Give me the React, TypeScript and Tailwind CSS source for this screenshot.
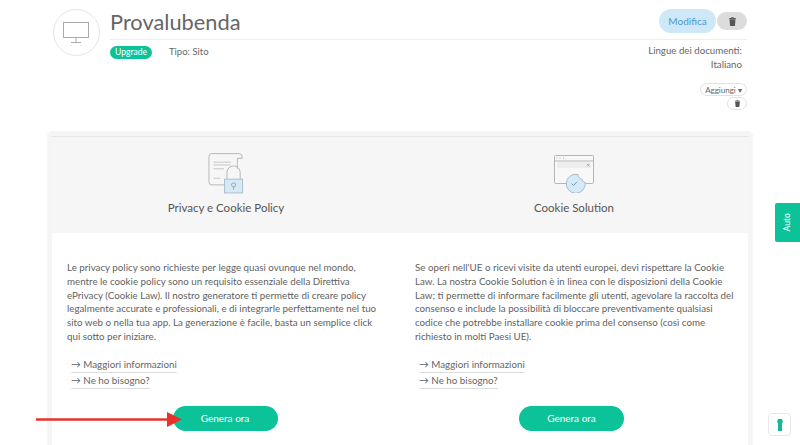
import React from "react";

const Trash = ({ s = 10 }: { s?: number }) => (
  <svg width={s} height={s} viewBox="0 0 12 12" fill="#555">
    <path d="M2 3h8l-.7 8.200a.8.8 0 0 1-.8.8h-5a.8.8 0 0 1-.8-.8z" />
    <rect x="1.500" y="1.200" width="9" height="1.300" rx=".4" />
    <rect x="4.500" y=".3" width="3" height="1.200" rx=".4" />
  </svg>
);

const DocIcon = () => (
  <svg width="36" height="43" viewBox="0 0 38 44" fill="none" stroke="#b5b5b5" strokeWidth="1">
    <path d="M28 1H4a3 3 0 0 0-3 3v27a3 3 0 0 0 3 3h14" />
    <path d="M28 1h5a3 3 0 0 1 3 3v2h-5v11" />
    <path d="M6 10h18M6 13h18" stroke="#c4c4c4" />
    <path d="M6 17h11" stroke="#c4c4c4" />
    <path d="M6 27h7" stroke="#c4c4c4" />
    <path d="M20 28v-7a7 7 0 0 1 14 0v7" />
    <rect x="17.500" y="28" width="19" height="14.500" fill="#d6e9f6" stroke="#a9bccb" />
    <circle cx="27" cy="34" r="2.200" stroke="#93a7b5" />
    <path d="M27 36v3" stroke="#93a7b5" />
  </svg>
);

const WinIcon = () => (
  <svg className="mt-[3px]" width="40" height="38" viewBox="0 0 40 38" fill="none" stroke="#b5b5b5" strokeWidth="1">
    <rect x=".5" y=".5" width="39" height="28" rx="1" fill="#f8f8f8" />
    <path d="M.5 6h39" />
    <rect x="3" y="7" width="34" height="6" fill="#ededed" stroke="none" />
    <path d="M2.500 3h1M5.500 3h1M9 3h1" stroke="#aaa" />
    <path d="M33 9l2.500 2.500M35.500 9L33 11.500" stroke="#aaa" />
    <path d="M24 19.500a9.500 9.500 0 1 0 7.200 8 4 4 0 0 1-3.500-3.500 4 4 0 0 1-3.700-4.500z" fill="#d6e9f6" stroke="#a9bccb" />
    <path d="M17.500 28.500l2 2 3.500-3.800" stroke="#7f96a6" />
  </svg>
);

const Col = ({ title, icon, body, btnClass }: { title: string; icon: React.ReactNode; body: string[]; btnClass: string }) => (
  <div className="flex-1 min-w-0">
    <div className="bg-[#f6f6f6] h-[96px] flex flex-col items-center">
      <div className="h-[49px] mt-[15px] flex items-start">{icon}</div>
      <div className="text-[11.500px] text-[#555] leading-[14px]">{title}</div>
    </div>
    <div className="pt-[28px] px-[15px]">
      <div className="text-[9.750px] leading-[13.800px] text-[#5f5f5f] h-[83px]">
        {body.map((l, i) => (
          <div key={i} className="whitespace-nowrap">{l}</div>
        ))}
      </div>
      <div className="mt-[14px] ml-[4px] flex flex-col items-start text-[9.800px] text-[#666] leading-[13px] gap-[1px]">
        <span className="border-b border-[#ddd] pb-[1px]">→ Maggiori informazioni</span>
        <span className="border-b border-[#ddd] pb-[1px]">→ Ne ho bisogno?</span>
      </div>
      <div className={btnClass}>
        <div className="w-[105px] h-[25px] rounded-full bg-[#0cc298] text-white text-[10px] flex items-center justify-center">Genera ora</div>
      </div>
    </div>
  </div>
);

export default function App() {
  return (
    <div
      className="relative w-[800px] h-[445px] overflow-hidden bg-white text-[#555]"
      style={{ fontFamily: '"Lato", "Noto Sans", sans-serif' }}
    >
      <div className="mx-[53px] pt-[9px] flex items-start gap-[10px]">
        <div className="w-[47px] h-[47px] rounded-full border border-[#e4e4e4] flex items-center justify-center shrink-0">
          <svg width="27" height="21" viewBox="0 0 27 21" fill="none" stroke="#aaa" strokeWidth="1">
            <rect x=".5" y=".5" width="25" height="15" />
            <path d="M13 16v4M8 20.500h10" />
          </svg>
        </div>
        <div className="flex-1 min-w-0">
          <div className="flex items-start justify-between h-[31px] border-b border-[#eee]">
            <div className="text-[21.800px] leading-[26px] text-[#666]">Provalubenda</div>
            <div className="flex items-center gap-[1px]">
              <div className="w-[57px] h-[24px] rounded-full bg-[#cfe8f8] text-[#4c98cf] text-[10px] flex items-center justify-center">Modifica</div>
              <div className="w-[30px] h-[18px] rounded-full bg-[#dcdcdc] flex items-center justify-center"><Trash s={9} /></div>
            </div>
          </div>
          <div className="flex items-start justify-between mt-[5px]">
            <div className="flex items-center">
              <div className="w-[42px] h-[13px] rounded-full bg-[#0cc298] text-white text-[8.500px] flex items-center justify-center">Upgrade</div>
              <div className="ml-[17px] text-[9.500px] text-[#666]">Tipo: Sito</div>
            </div>
            <div className="flex flex-col items-end -mt-[2px]">
              <div className="text-[9.700px] leading-[14px] text-[#666] text-right pr-[5px]">
                Lingue dei documenti:<br />Italiano
              </div>
              <div className="mt-[12px] w-[47px] h-[13px] rounded-full border border-[#e2e2e2] text-[8px] text-[#666] flex items-center justify-center">Aggiungi ▾</div>
              <div className="mt-[1px] w-[20px] h-[13px] rounded-full border border-[#e2e2e2] flex items-center justify-center"><Trash s={7} /></div>
            </div>
          </div>
        </div>
      </div>

      <div className="mt-[21px] mx-[47px] border-[5px] border-[#f5f5f5] rounded-[5px]">
        <div className="flex border-t border-[#e6e6e6] h-[320px]">
          <Col
            title="Privacy e Cookie Policy"
            icon={<DocIcon />}
            btnClass="flex justify-center mt-[17px] pr-[2px]"
            body={[
              "Le privacy policy sono richieste per legge quasi ovunque nel mondo,",
              "mentre le cookie policy sono un requisito essenziale della Direttiva",
              "ePrivacy (Cookie Law). Il nostro generatore ti permette di creare policy",
              "legalmente accurate e professionali, e di integrarle perfettamente nel tuo",
              "sito web o nella tua app. La generazione è facile, basta un semplice click",
              "qui sotto per iniziare.",
            ]}
          />
          <Col
            title="Cookie Solution"
            icon={<WinIcon />}
            btnClass="flex justify-center mt-[17px] pr-[5px]"
            body={[
              "Se operi nell'UE o ricevi visite da utenti europei, devi rispettare la Cookie",
              "Law. La nostra Cookie Solution è in linea con le disposizioni della Cookie",
              "Law; ti permette di informare facilmente gli utenti, agevolare la raccolta del",
              "consenso e include la possibilità di bloccare preventivamente qualsiasi",
              "codice che potrebbe installare cookie prima del consenso (così come",
              "richiesto in molti Paesi UE).",
            ]}
          />
        </div>
      </div>

      <svg className="absolute left-[36px] top-[411px]" width="146" height="16" viewBox="0 0 146 16">
        <path d="M0 8.500h132" stroke="#e8322b" strokeWidth="2.500" />
        <path d="M131 1l15 7.500-15 7.500z" fill="#e8322b" />
      </svg>

      <div className="absolute left-[775px] top-[203px] w-[25px] h-[39px] bg-[#0cc298] rounded-l-[2px] flex items-center justify-center">
        <span className="-rotate-90 text-white text-[8.500px]">Auto</span>
      </div>

      <div className="absolute left-[768px] top-[413px] w-[23px] h-[23px] rounded-[4px] border border-[#e8e8e8] bg-white flex items-center justify-center">
        <svg width="6" height="12" viewBox="0 0 6 12" fill="#14b893">
          <path d="M1 0h4l1 3-1 1v8H1V4L0 3z" />
        </svg>
      </div>
    </div>
  );
}
